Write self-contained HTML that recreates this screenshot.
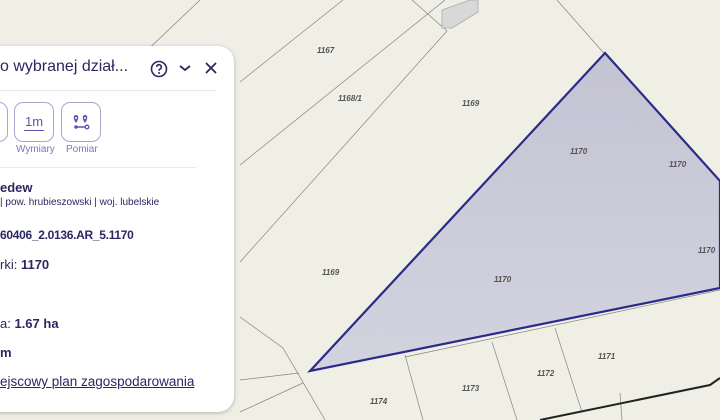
<!DOCTYPE html>
<html><head><meta charset="utf-8"><style>
html,body{margin:0;padding:0;width:720px;height:420px;overflow:hidden;background:#efefe6;font-family:"Liberation Sans",sans-serif}
svg.map{position:absolute;left:0;top:0}
.panel{position:absolute;left:-20px;top:46px;width:254px;height:366px;background:#fff;border-radius:0 16px 16px 0;box-shadow:0 1px 4px rgba(0,0,0,.25);color:#2a2760}
.t{position:absolute;white-space:nowrap}
.btn{position:absolute;top:56px;width:40px;height:40px;border:1px solid #a8a6cf;border-radius:9px;box-sizing:border-box}
.lbl{position:absolute;top:98px;font-size:10px;color:#7b78c0}
</style></head><body>
<svg class="map" width="720" height="420" viewBox="0 0 720 420">
<rect width="720" height="420" fill="#efefe6"/>
<g stroke="#85857c" stroke-width="0.7" fill="none">
<line x1="200" y1="0" x2="0" y2="190"/>
<line x1="343" y1="0" x2="240" y2="82"/>
<line x1="445" y1="0" x2="240" y2="165"/>
<line x1="447" y1="31" x2="240" y2="262"/>
<line x1="412" y1="0" x2="447" y2="31"/>
<line x1="557" y1="0" x2="720" y2="185"/>
<polyline points="240,317 283,348 325,420"/>
<line x1="299" y1="373" x2="240" y2="380"/>
<line x1="303" y1="383" x2="240" y2="412"/>
<line x1="405" y1="357" x2="720" y2="290"/>
<line x1="405" y1="355" x2="423" y2="420"/>
<line x1="492" y1="342" x2="517" y2="420"/>
<line x1="555" y1="328" x2="582" y2="412"/>
<line x1="620" y1="393" x2="622" y2="420"/>
</g>
<path d="M540 420 L710 385 L720 378" stroke="#222" stroke-width="2" fill="none"/>
<polygon points="442,10 470,0 478,0 478,12 452,28 442,28" fill="#d8d8d8" stroke="#aaa" stroke-width="0.8"/>
<defs><linearGradient id="g" x1="0" y1="0" x2="0" y2="1"><stop offset="0" stop-color="#c4c3d3"/><stop offset="1" stop-color="#d3d3e0"/></linearGradient></defs>
<polygon points="605,53 720,181 720,288 310,371" fill="url(#g)" stroke="#2a2a8a" stroke-width="2.2"/>
<g font-size="8" font-style="italic" font-weight="bold" fill="#555" font-family="Liberation Sans">
<text x="317" y="53">1167</text><text x="338" y="101">1168/1</text><text x="462" y="106">1169</text>
<text x="322" y="275">1169</text><text x="570" y="154">1170</text><text x="669" y="167">1170</text>
<text x="698" y="253">1170</text><text x="494" y="282">1170</text><text x="598" y="359">1171</text>
<text x="537" y="376">1172</text><text x="462" y="391">1173</text><text x="370" y="404">1174</text>
</g>
</svg>
<div class="panel">
<div class="t" style="left:20px;top:12px;font-size:16px">o wybranej dział...</div>
<svg class="t" style="left:170px;top:14px" width="18" height="18" viewBox="0 0 18 18"><circle cx="9" cy="9" r="7.5" fill="none" stroke="#2a2760" stroke-width="1.6"/><path d="M6.7 7a2.3 2.3 0 1 1 3 2.2c-.6.3-.7.7-.7 1.5" fill="none" stroke="#2a2760" stroke-width="1.6"/><circle cx="9" cy="13" r="1" fill="#2a2760"/></svg>
<svg class="t" style="left:198px;top:17px" width="14" height="10"><path d="M2 3l5 4 5-4" fill="none" stroke="#2a2760" stroke-width="1.8"/></svg>
<svg class="t" style="left:224px;top:15px" width="14" height="14"><path d="M2 2l10 10M12 2L2 12" stroke="#2a2760" stroke-width="1.8"/></svg>
<div style="position:absolute;left:0;top:44px;width:236px;height:1px;background:#e8e8ee"></div>
<div class="btn" style="left:-12px"></div>
<div class="btn" style="left:34px"><div class="t" style="left:10px;top:11px;font-size:13px;color:#5a55b0">1m</div><div style="position:absolute;left:9px;top:27px;width:20px;height:1px;background:#5a55b0"></div></div>
<div class="btn" style="left:81px"><svg style="position:absolute;left:10px;top:9px" width="20" height="20" viewBox="0 0 20 20"><path d="M4 11C1 7 1 3 4 3s3 4 0 8zM13 11c-3-4-3-8 0-8s3 4 0 8z" fill="#5a55b0"/><circle cx="4" cy="6" r="1" fill="#fff"/><circle cx="13" cy="6" r="1" fill="#fff"/><line x1="4" y1="15" x2="14" y2="15" stroke="#5a55b0" stroke-width="1.5"/><circle cx="4" cy="15" r="1.8" fill="#5a55b0"/><circle cx="15" cy="15" r="1.8" fill="#fff" stroke="#5a55b0" stroke-width="1.3"/></svg></div>
<div class="lbl" style="left:36px">Wymiary</div><div class="lbl" style="left:86px">Pomiar</div>
<div style="position:absolute;left:0;top:121px;width:216px;height:1px;background:#e8e8ee"></div>
<div class="t" style="left:20px;top:134px;font-size:13px;font-weight:bold">edew</div>
<div class="t" style="left:20px;top:151px;font-size:10px">| pow. hrubieszowski | woj. lubelskie</div>
<div class="t" style="left:20px;top:182px;font-size:12px;font-weight:bold;letter-spacing:-0.3px">60406_2.0136.AR_5.1170</div>
<div class="t" style="left:20px;top:211px;font-size:13px">rki: <b>1170</b></div>
<div class="t" style="left:20px;top:270px;font-size:13px">a: <b>1.67 ha</b></div>
<div class="t" style="left:20px;top:299px;font-size:13px;font-weight:bold">m</div>
<div class="t" style="left:20px;top:328px;font-size:13.5px;text-decoration:underline">ejscowy plan zagospodarowania</div>
</div>
</body></html>
